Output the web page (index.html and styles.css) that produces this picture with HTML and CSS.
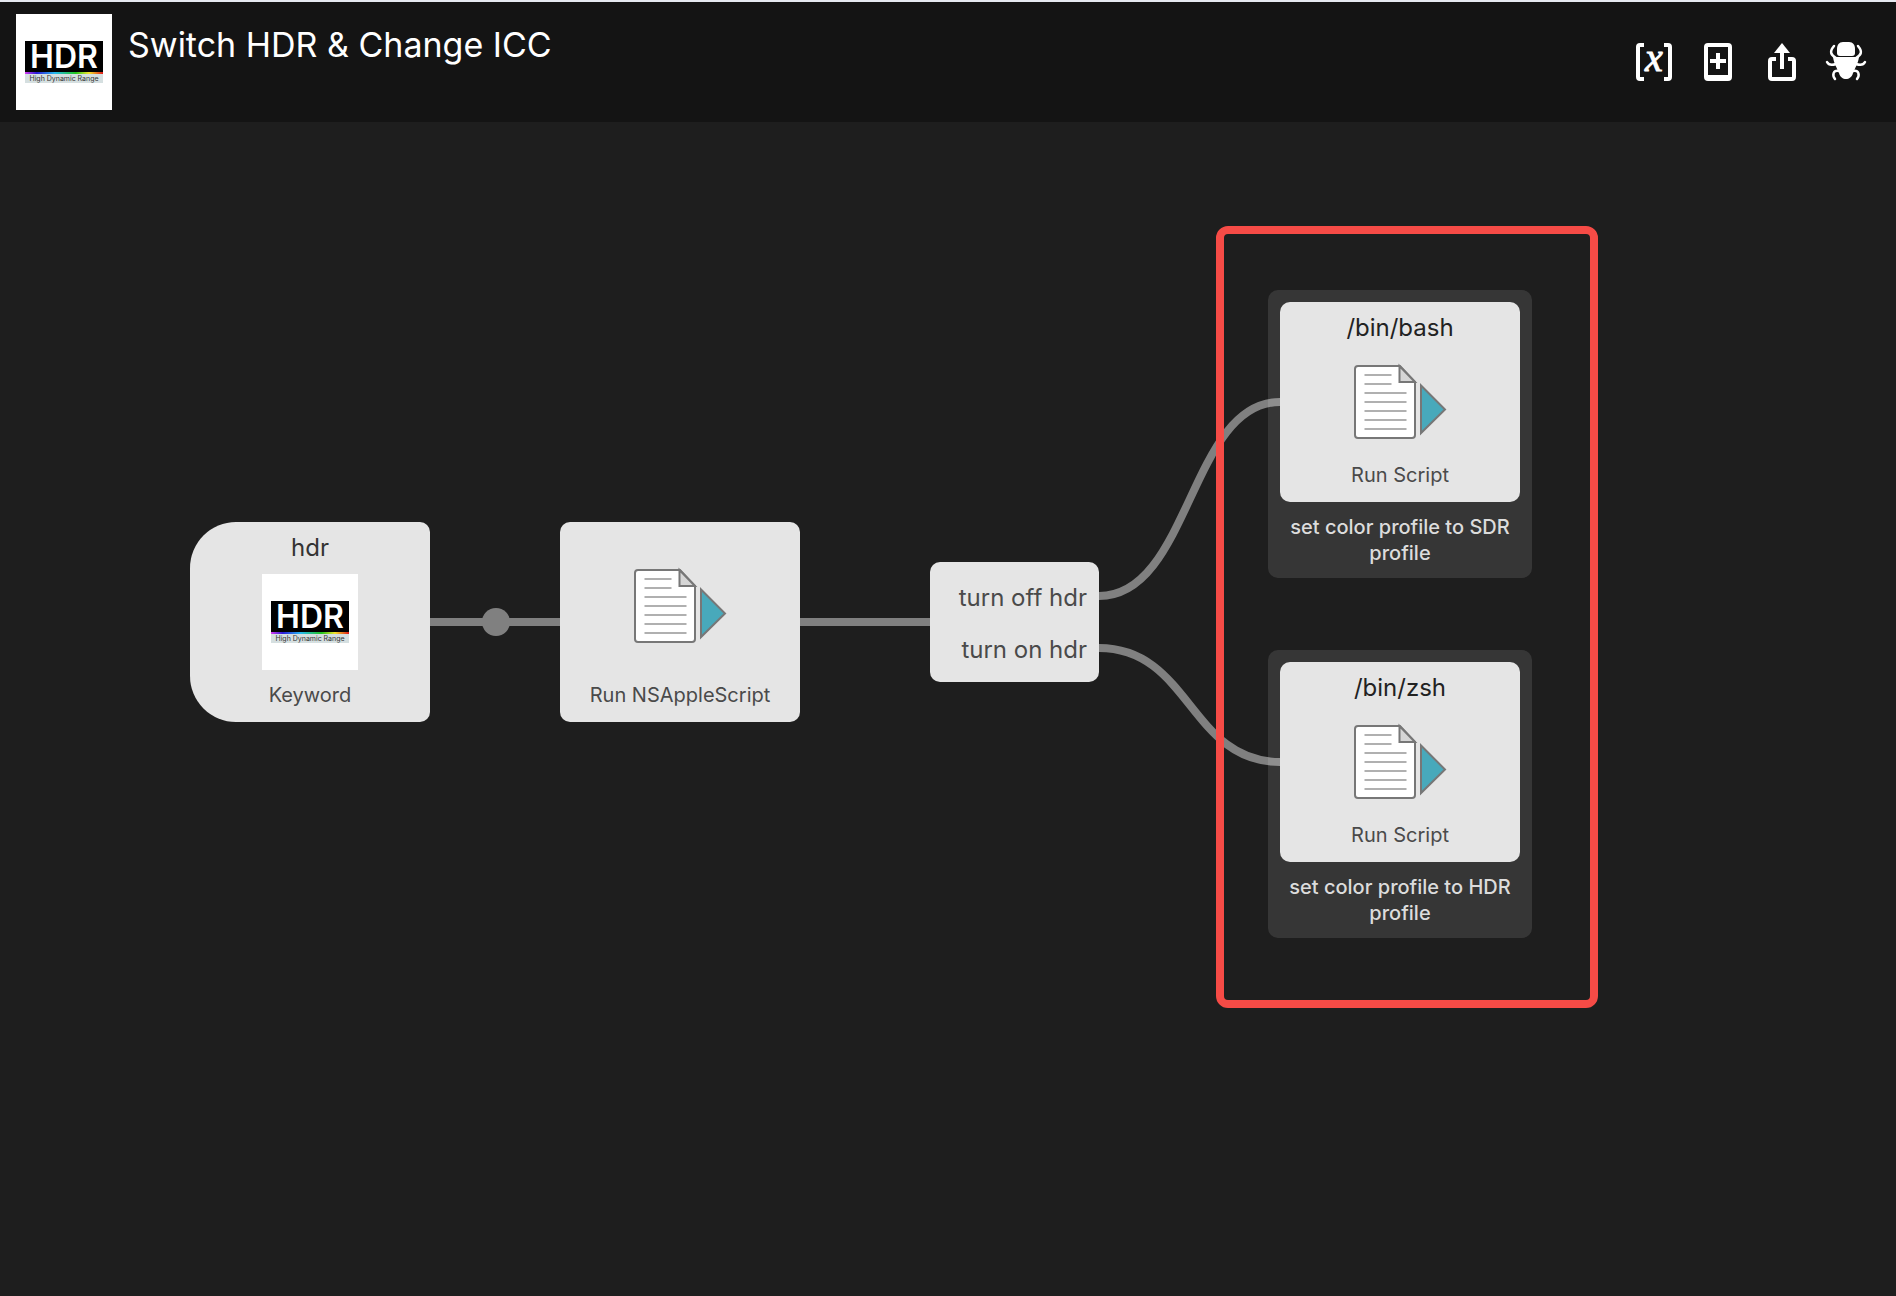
FILE: index.html
```html
<!DOCTYPE html>
<html lang="en">
<head>
<meta charset="utf-8">
<title>Switch HDR &amp; Change ICC</title>
<link rel="stylesheet" href="styles.css">
</head>
<body>
<svg class="defs" aria-hidden="true">
  <defs>
    <linearGradient id="spectrum">
      <stop offset="0" stop-color="#d63cf0"/>
      <stop offset=".15" stop-color="#2a1bd8"/>
      <stop offset=".38" stop-color="#25b8f0"/>
      <stop offset=".65" stop-color="#22c51e"/>
      <stop offset=".82" stop-color="#f3e52c"/>
      <stop offset="1" stop-color="#e01818"/>
    </linearGradient>
    <symbol id="hdr-logo" viewBox="0 0 96 96">
      <rect width="96" height="96" fill="#fff"/>
      <rect x="9" y="27" width="78" height="42" fill="#d5dfe0"/>
      <rect x="9" y="27" width="78" height="31" fill="#000"/>
      <rect x="9" y="58" width="78" height="2" fill="url(#spectrum)"/>
      <text class="logo-name" x="48" y="54" text-anchor="middle">HDR</text>
      <text class="logo-sub" x="48" y="67" text-anchor="middle">High Dynamic Range</text>
    </symbol>
    <symbol id="script-icon" viewBox="0 0 96 96">
      <path d="M6 12h42l15 16v53a3 3 0 0 1-3 3H6a3 3 0 0 1-3-3V15a3 3 0 0 1 3-3z" fill="#fff" stroke="#777" stroke-width="2"/>
      <path d="M47.500 12v16H63z" fill="#d6d6d6" stroke="#777" stroke-width="2"/>
      <path d="M12.500 21h27M12.500 30h27M12.500 39h42M12.500 48h42M12.500 57h42M12.500 66h42M12.500 75h42" stroke="#b0b0b0" stroke-width="2"/>
      <path d="M69 31.500v47.500l24-23.500z" fill="#48a9bb" stroke="#777" stroke-width="2"/>
    </symbol>
  </defs>
</svg>

<header class="topbar">
  <svg class="logo" role="img" aria-label="HDR"><use href="#hdr-logo"/></svg>
  <h1 class="title">Switch HDR &amp; Change ICC</h1>
  <nav class="tools" aria-label="Workflow tools">
    <button class="tool" type="button" aria-label="Variables">
      <svg viewBox="0 0 40 40">
        <path d="M10 3H6a2 2 0 0 0-2 2v30a2 2 0 0 0 2 2h4M30 3h4a2 2 0 0 1 2 2v30a2 2 0 0 1-2 2h-4" fill="none" stroke="#fff" stroke-width="4"/>
        <text class="variable" x="20" y="29" text-anchor="middle">x</text>
      </svg>
    </button>
    <button class="tool" type="button" aria-label="Add configuration">
      <svg viewBox="0 0 40 40">
        <path fill="#fff" fill-rule="evenodd" d="M10 1h20a4 4 0 0 1 4 4v30a4 4 0 0 1-4 4H10a4 4 0 0 1-4-4V5a4 4 0 0 1 4-4zm0 4v28h20V5z"/>
        <path d="M20 11v16M12 19h16" stroke="#fff" stroke-width="4"/>
      </svg>
    </button>
    <button class="tool" type="button" aria-label="Share">
      <svg viewBox="0 0 40 40" fill="none" stroke="#fff" stroke-width="4">
        <path d="M14 17H10a2 2 0 0 0-2 2v16a2 2 0 0 0 2 2h20a2 2 0 0 0 2-2V19a2 2 0 0 0-2-2h-4M20 27V9"/>
        <path d="M20 1l8 10H12z" fill="#fff" stroke="none"/>
      </svg>
    </button>
    <button class="tool" type="button" aria-label="Debug">
      <svg viewBox="0 0 40 40">
        <path fill="#fff" d="M17 0h6c4 0 6 3 6 7v4q0 3-3 3H14q-3 0-3-3V7c0-4 2-7 6-7z"/>
        <path fill="#fff" d="M7 15h26c-1 7-4 11-6 16-1 4-4 6-7 6s-6-2-7-6c-2-5-5-9-6-16z"/>
        <path fill="none" stroke="#fff" stroke-width="2.500" stroke-linecap="round" d="M8 4C3 10 5 13 10 16M32 4c5 6 3 9-2 12M1 20c2 4 6 3 9 2M39 20c-2 4-6 3-9 2M13 29c-6-1-7 4-4 8M27 29c6-1 7 4 4 8"/>
      </svg>
    </button>
  </nav>
</header>

<main class="canvas">
  <svg class="wires" aria-hidden="true">
    <path d="M430 500H560M800 500H930M1099 474C1190 474 1190 280 1280 280M1099 526C1190 526 1190 640 1280 640"/>
    <circle cx="496" cy="500" r="14"/>
  </svg>

  <article class="node node-keyword">
    <h2 class="node-title">hdr</h2>
    <svg class="node-icon" role="img" aria-label="HDR"><use href="#hdr-logo"/></svg>
    <p class="node-label">Keyword</p>
  </article>

  <article class="node node-apple">
    <svg class="node-icon" aria-hidden="true"><use href="#script-icon"/></svg>
    <p class="node-label">Run NSAppleScript</p>
  </article>

  <ul class="switch">
    <li>turn off hdr</li>
    <li>turn on hdr</li>
  </ul>

  <section class="card card-sdr">
    <article class="node">
      <h2 class="node-title node-title-dark">/bin/bash</h2>
      <svg class="node-icon" aria-hidden="true"><use href="#script-icon"/></svg>
      <p class="node-label">Run Script</p>
    </article>
    <p class="card-note">set color profile to SDR profile</p>
  </section>

  <section class="card card-hdr">
    <article class="node">
      <h2 class="node-title node-title-dark">/bin/zsh</h2>
      <svg class="node-icon" aria-hidden="true"><use href="#script-icon"/></svg>
      <p class="node-label">Run Script</p>
    </article>
    <p class="card-note">set color profile to HDR profile</p>
  </section>

  <div class="highlight"></div>
</main>
</body>
</html>
```
FILE: styles.css
```css
* {
  box-sizing: border-box;
  margin: 0;
}

body {
  display: flex;
  flex-direction: column;
  min-height: 100vh;
  background: #1e1e1e;
  color: #fff;
  font-family: Inter, "Liberation Sans", sans-serif;
}

.defs {
  position: absolute;
  width: 0;
  height: 0;
}

.logo-name {
  font: 600 32px Inter, sans-serif;
  fill: #fff;
}

.logo-sub {
  font: 400 7px Inter, sans-serif;
  fill: #333;
}

/* Top bar */
.topbar {
  display: flex;
  align-items: flex-start;
  gap: 16px;
  padding: 12px 30px 12px 16px;
  border-top: 2px solid #e6e9f0;
  background: #141414;
}

.logo {
  flex: none;
  width: 96px;
  height: 96px;
}

.title {
  padding-top: 10px;
  font-size: 34px;
  font-weight: 400;
  line-height: 42px;
}

.tools {
  display: flex;
  gap: 24px;
  align-self: center;
  margin-left: auto;
}

.tool {
  width: 40px;
  height: 40px;
  padding: 0;
  border: 0;
  background: none;
}

.tool svg {
  display: block;
  width: 40px;
  height: 40px;
  overflow: visible;
}

.variable {
  font: italic 400 40px "Liberation Serif", serif;
  fill: #fff;
  stroke: #fff;
  stroke-width: 1px;
}

/* Workflow canvas */
.canvas {
  position: relative;
  flex: 1;
}

.wires {
  position: absolute;
  inset: 0;
  width: 100%;
  height: 100%;
  fill: none;
  stroke: #808080;
  stroke-width: 8px;
}

.wires circle {
  fill: #808080;
  stroke: none;
}

.node {
  display: flex;
  flex-direction: column;
  align-items: center;
  width: 240px;
  height: 200px;
  padding: 12px 0 14px;
  border-radius: 10px;
  background: #e5e5e5;
}

.node-title {
  margin-bottom: 12px;
  color: #333;
  font-size: 24px;
  font-weight: 400;
  line-height: 28px;
}

.node-title-dark {
  color: #222;
}

.node-icon {
  flex: none;
  width: 96px;
  height: 96px;
}

.node-label {
  margin-top: auto;
  color: #4a4a4a;
  font-size: 20px;
  line-height: 26px;
}

.node-keyword {
  position: absolute;
  left: 190px;
  top: 400px;
  border-radius: 46px 10px 10px 46px;
}

.node-apple {
  position: absolute;
  left: 560px;
  top: 400px;
  padding-top: 36px;
}

.switch {
  position: absolute;
  left: 930px;
  top: 440px;
  width: 169px;
  padding: 10px 12px 6px;
  border-radius: 10px;
  background: #e5e5e5;
  color: #4a4a4a;
  font-size: 24px;
  line-height: 52px;
  list-style: none;
  text-align: right;
}

.card {
  position: absolute;
  left: 1268px;
  width: 264px;
  padding: 12px;
  border-radius: 10px;
  background: rgba(255, 255, 255, 0.11);
}

.card-sdr {
  top: 168px;
}

.card-hdr {
  top: 528px;
}

.card-note {
  padding-top: 12px;
  color: #dcdcdc;
  font-size: 20px;
  font-weight: 500;
  line-height: 26px;
  text-align: center;
}

.highlight {
  position: absolute;
  left: 1216px;
  top: 104px;
  width: 382px;
  height: 782px;
  border: 8px solid #f64b46;
  border-radius: 12px;
}
```
